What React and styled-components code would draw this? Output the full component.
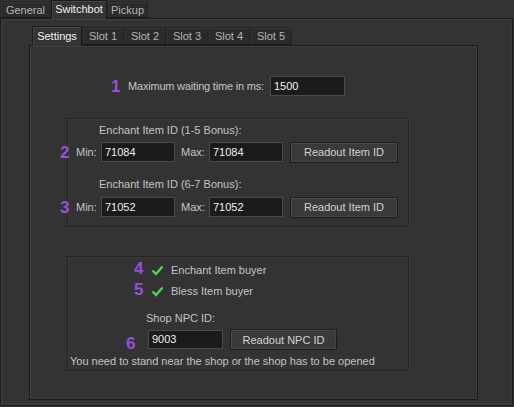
import React from 'react';
import styled, { createGlobalStyle } from 'styled-components';

const Global = createGlobalStyle`
  html, body { margin: 0; padding: 0; background: #333333; }
  body {
    width: 514px; height: 407px; overflow: hidden;
    font-family: Tahoma, "Liberation Sans", Arial, sans-serif;
    font-size: 11px; color: #c4c4c4;
  }
  * { box-sizing: border-box; }
`;

const Window = styled.div`
  width: 514px;
  height: 407px;
  display: flex;
  flex-direction: column;
  background: #333333;
`;

const TabBar = styled.div`
  display: flex;
  align-items: flex-end;
  height: ${p => p.$h}px;
  padding-left: ${p => p.$pl || 0}px;
  position: relative;
  z-index: 2;
  flex: none;
`;

const Tab = styled.div`
  width: ${p => p.$w}px;
  height: ${p => (p.$active ? p.$h + 2 : p.$h)}px;
  margin-bottom: ${p => (p.$active ? -1 : 0)}px;
  display: flex;
  align-items: center;
  justify-content: center;
  padding-bottom: ${p => (p.$active ? 2 : 0)}px;
  background: ${p => (p.$active ? '#343434' : '#2b2b2b')};
  color: ${p => (p.$active ? '#f2f2f2' : '#b4b4b4')};
  border: 1px solid ${p => (p.$active ? '#1c1c1c' : '#262626')};
  border-bottom: ${p => (p.$active ? 'none' : '1px solid #1c1c1c')};
  box-shadow: ${p => (p.$active ? 'inset 1px 1px 0 #454545' : 'inset 1px 1px 0 #363636')};
  white-space: nowrap;
`;

const Pane = styled.div`
  flex: 1;
  display: flex;
  flex-direction: column;
  border: 1px solid #1c1c1c;
  box-shadow: inset 1px 1px 0 #3f3f3f, inset -1px -1px 0 #3a3a3a;
  background: #333333;
  margin: ${p => p.$m || '0'};
  padding: ${p => p.$pad || '0'};
  position: relative;
  z-index: 1;
`;

const Content = styled.div`
  display: flex;
  flex-direction: column;
  align-items: flex-start;
  padding-left: 37px;
`;

const Row = styled.div`
  display: flex;
  align-items: center;
  height: ${p => p.$h || 20}px;
  margin-top: ${p => p.$mt || 0}px;
  margin-left: ${p => p.$ml || 0}px;
  white-space: nowrap;
`;

const Num = styled.span`
  font-family: "Liberation Sans", Arial, sans-serif;
  font-weight: bold;
  font-size: 17px;
  line-height: 17px;
  color: #9750dd;
  width: ${p => p.$w || 10}px;
  margin-top: ${p => p.$dy || 0}px;
  flex: none;
`;

const Label = styled.span`
  display: inline-block;
  color: #c4c4c4;
  line-height: ${p => p.$lh || 14}px;
  letter-spacing: ${p => p.$ls || 0}px;
  width: ${p => (p.$w ? `${p.$w}px` : 'auto')};
  margin-left: ${p => p.$ml || 0}px;
  margin-top: ${p => p.$mt || 0}px;
  flex: none;
`;

const Input = styled.div`
  width: ${p => p.$w || 75}px;
  height: ${p => p.$h || 20}px;
  margin-left: ${p => p.$ml || 0}px;
  background: #1b1b1b;
  border: 1px solid #4a4a4a;
  color: #f0f0f0;
  font-size: 11px;
  line-height: ${p => (p.$h || 20) - 2}px;
  padding-left: 3px;
  flex: none;
`;

const Button = styled.div`
  width: ${p => p.$w || 108}px;
  height: ${p => p.$h || 21}px;
  margin-left: ${p => p.$ml || 0}px;
  background: #3a3a3a;
  border: 1px solid #1d1d1d;
  box-shadow: inset 1px 1px 0 #4b4b4b, inset -1px -1px 0 #444;
  color: #d2d2d2;
  font-size: 11px;
  display: flex;
  align-items: center;
  justify-content: center;
  flex: none;
`;

const Group = styled.div`
  width: 342px;
  height: ${p => p.$h}px;
  margin-top: ${p => p.$mt}px;
  border: 1px solid #242424;
  box-shadow: inset 1px 1px 0 #3c3c3c, 1px 1px 0 #3c3c3c;
  display: flex;
  flex-direction: column;
  align-items: flex-start;
  padding-top: ${p => p.$pt || 0}px;
`;

const Check = styled.svg`
  width: 13px;
  height: 11px;
  flex: none;
  margin-right: 7px;
`;

const CheckIcon = () => (
  <Check viewBox="0 0 13 11">
    <polyline points="1.5,5.5 5,9 11.5,1.5" fill="none" stroke="#4cd45c" strokeWidth="2.4" strokeLinejoin="miter" />
  </Check>
);

const outerTabs = [
  { t: 'General', w: 51 },
  { t: 'Switchbot', w: 56, active: true },
  { t: 'Pickup', w: 41 },
];
const innerTabs = [
  { t: 'Settings', w: 50, active: true },
  { t: 'Slot 1', w: 42 },
  { t: 'Slot 2', w: 42 },
  { t: 'Slot 3', w: 42 },
  { t: 'Slot 4', w: 42 },
  { t: 'Slot 5', w: 42 },
];

const IdRow = ({ n, value, mt }) => (
  <Row $mt={mt} $ml={-8}>
    <Num $w={16}>{n}</Num>
    <Label $w={25}>Min:</Label>
    <Input $w={74}>{value}</Input>
    <Label $w={28} $ml={6}>Max:</Label>
    <Input $w={74}>{value}</Input>
    <Button $ml={7} $w={108}>Readout Item ID</Button>
  </Row>
);

export default function App() {
  return (
    <>
      <Global />
      <Window>
        <TabBar $h={18}>
          {outerTabs.map(tab => (
            <Tab key={tab.t} $w={tab.w} $h={17} $active={tab.active}>{tab.t}</Tab>
          ))}
        </TabBar>
        <Pane $m="0 1px 1px 0" $pad="6px 34px 5px 28px">
          <TabBar $h={20} $pl={3}>
            {innerTabs.map(tab => (
              <Tab key={tab.t} $w={tab.w} $h={18} $active={tab.active}>{tab.t}</Tab>
            ))}
          </TabBar>
          <Pane>
            <Content>
              <Row $mt={30} $ml={44}>
                <Num $w={17}>1</Num>
                <Label $w={142} $ls={-0.2}>Maximum waiting time in ms:</Label>
                <Input $w={75} $h={20}>1500</Input>
              </Row>

              <Group $mt={22} $h={109} $pt={4}>
                <Label $ml={31}>Enchant Item ID (1-5 Bonus):</Label>
                <IdRow n="2" value="71084" mt={5} />
                <Label $ml={31} $mt={15}>Enchant Item ID (6-7 Bonus):</Label>
                <IdRow n="3" value="71052" mt={6} />
              </Group>

              <Group $mt={29} $h={115} $pt={3}>
                <Row $ml={66} $h={20}>
                  <Num $w={17} $dy={-3}>4</Num>
                  <CheckIcon />
                  <Label>Enchant Item buyer</Label>
                </Row>
                <Row $ml={66} $h={22}>
                  <Num $w={17} $dy={-3}>5</Num>
                  <CheckIcon />
                  <Label>Bless Item buyer</Label>
                </Row>
                <Label $ml={78} $mt={9}>Shop NPC ID:</Label>
                <Row $ml={58} $mt={4} $h={21}>
                  <Num $w={22} $dy={7}>6</Num>
                  <Input $w={75} $h={19}>9003</Input>
                  <Button $ml={7} $w={107} $h={21}>Readout NPC ID</Button>
                </Row>
                <Label $ml={2} $mt={5} $lh={13}>You need to stand near the shop or the shop has to be opened</Label>
              </Group>
            </Content>
          </Pane>
        </Pane>
      </Window>
    </>
  );
}
